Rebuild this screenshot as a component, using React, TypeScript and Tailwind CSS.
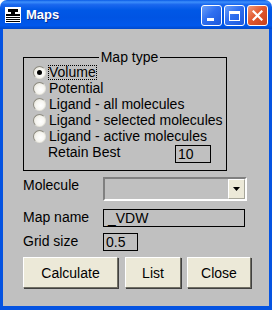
import React from 'react';

const mapTypes = [
  'Volume',
  'Potential',
  'Ligand - all molecules',
  'Ligand - selected molecules',
  'Ligand - active molecules',
];

function Radio({ checked }: { checked?: boolean }) {
  return (
    <span className="w-[13px] h-[13px] shrink-0 rounded-full border border-t-[#8d8b80] border-l-[#8d8b80] border-b-[#e6e4da] border-r-[#e6e4da] bg-[radial-gradient(circle_at_60%_60%,#ffffff_0%,#f6f5f0_50%,#dcd9cc_100%)] flex items-center justify-center">
      {checked && <span className="w-[5px] h-[5px] rounded-full bg-black" />}
    </span>
  );
}

function TitleBar() {
  return (
    <div className="h-[29px] shrink-0 rounded-t-[7px] bg-[linear-gradient(to_bottom,#0a5be6_0%,#3d8ffb_7%,#1a67ee_16%,#0058e6_35%,#0054e3_60%,#0058ec_88%,#0049cc_100%)] flex items-start pl-[5px] pr-[4px]">
      <svg width="16" height="16" viewBox="0 0 16 16" className="mt-[7px] shrink-0">
        <rect x="0" y="0" width="16" height="16" fill="#fff" />
        <rect x="3" y="2" width="10" height="3" fill="#000" />
        <rect x="6" y="5" width="4" height="2" fill="#000" />
        <rect x="1" y="7" width="14" height="2" fill="#000" />
        <rect x="1" y="10" width="14" height="1" fill="#000" />
        <rect x="1" y="12" width="14" height="1" fill="#000" />
        <rect x="1" y="14" width="14" height="1" fill="#000" />
      </svg>
      <span className="ml-[5px] mt-[6px] text-white font-bold text-[13px] leading-[17px] [text-shadow:1px_1px_0_#0b2d8c]">
        Maps
      </span>
      <div className="ml-auto mt-[5px] flex gap-[2px]">
        <div className="w-[21px] h-[21px] rounded-[3px] border border-white bg-[linear-gradient(135deg,#6b9ff8_0%,#2f6ff0_45%,#1c58dc_100%)] flex items-end pl-[5px] pb-[4px]">
          <div className="w-[7px] h-[3px] bg-white" />
        </div>
        <div className="w-[21px] h-[21px] rounded-[3px] border border-white bg-[linear-gradient(135deg,#6b9ff8_0%,#2f6ff0_45%,#1c58dc_100%)] flex items-center justify-center">
          <div className="w-[11px] h-[10px] border border-white border-t-[3px]" />
        </div>
        <div className="w-[21px] h-[21px] rounded-[3px] border border-white bg-[linear-gradient(135deg,#f09a7a_0%,#e2592f_45%,#c8401a_100%)] flex items-center justify-center">
          <svg width="11" height="11" viewBox="0 0 11 11">
            <path d="M1.5 1.5 L9.5 9.5 M9.5 1.5 L1.5 9.5" stroke="#fff" strokeWidth="2.2" strokeLinecap="square" />
          </svg>
        </div>
      </div>
    </div>
  );
}

function XpButton({ label, width }: { label: string; width: string }) {
  return (
    <button
      className={`${width} h-[31px] bg-[#ece9d8] border border-t-white border-l-white border-b-[#716f64] border-r-[#716f64] shadow-[1px_1px_0_#404040] text-[14px] leading-[16px] text-black`}
    >
      {label}
    </button>
  );
}

export default function App() {
  return (
    <div className="w-[272px] h-[310px] flex flex-col font-['Liberation_Sans',Arial,sans-serif] text-[14px] text-black select-none">
      <TitleBar />
      <div className="flex-1 bg-[#c0c0c0] border-l-[3px] border-r-[3px] border-b-[4px] border-[#0553e1] pl-[20px] pt-[21px] flex flex-col">
        <fieldset className="w-[204px] border border-black pl-[9px] pb-[7px] m-0 p-0">
          <legend className="mx-auto px-[2px] leading-[14px]">Map type</legend>
          {mapTypes.map((t, i) => (
            <div key={t} className="h-[16px] flex items-center gap-[2px]">
              <Radio checked={i === 0} />
              <span
                className={`leading-[13px] border ${i === 0 ? 'border-dotted border-black' : 'border-transparent'}`}
              >
                {t}
              </span>
            </div>
          ))}
          <div className="h-[19px] flex items-start">
            <span className="w-[142px] pl-[15px] leading-[16px]">Retain Best</span>
            <div className="mt-[1px] w-[36px] h-[18px] border border-black pl-[2px] leading-[16px]">10</div>
          </div>
        </fieldset>

        <div className="mt-[6px] flex items-start">
          <span className="w-[80px] leading-[16px]">Molecule</span>
          <div className="w-[144px] h-[24px] border-2 border-t-[#808080] border-l-[#808080] border-b-white border-r-white flex justify-end">
            <div className="w-[17px] h-full bg-[#ece9d8] border border-t-white border-l-white border-b-[#a7a69a] border-r-[#a7a69a] flex items-center justify-center">
              <svg width="7" height="4" viewBox="0 0 7 4">
                <path d="M0 0 H7 L3.5 4 Z" fill="#000" />
              </svg>
            </div>
          </div>
        </div>

        <div className="mt-[8px] flex items-start">
          <span className="w-[80px] leading-[16px]">Map name</span>
          <div className="w-[142px] h-[18px] border border-black pl-[4px] leading-[16px]">_VDW</div>
        </div>

        <div className="mt-[6px] flex items-start">
          <span className="w-[80px] leading-[16px]">Grid size</span>
          <div className="w-[35px] h-[18px] border border-black pl-[2px] leading-[16px]">0.5</div>
        </div>

        <div className="mt-[6px] flex">
          <XpButton label="Calculate" width="w-[95px]" />
          <div className="ml-[7px]">
            <XpButton label="List" width="w-[56px]" />
          </div>
          <div className="ml-[6px]">
            <XpButton label="Close" width="w-[64px]" />
          </div>
        </div>
      </div>
    </div>
  );
}
